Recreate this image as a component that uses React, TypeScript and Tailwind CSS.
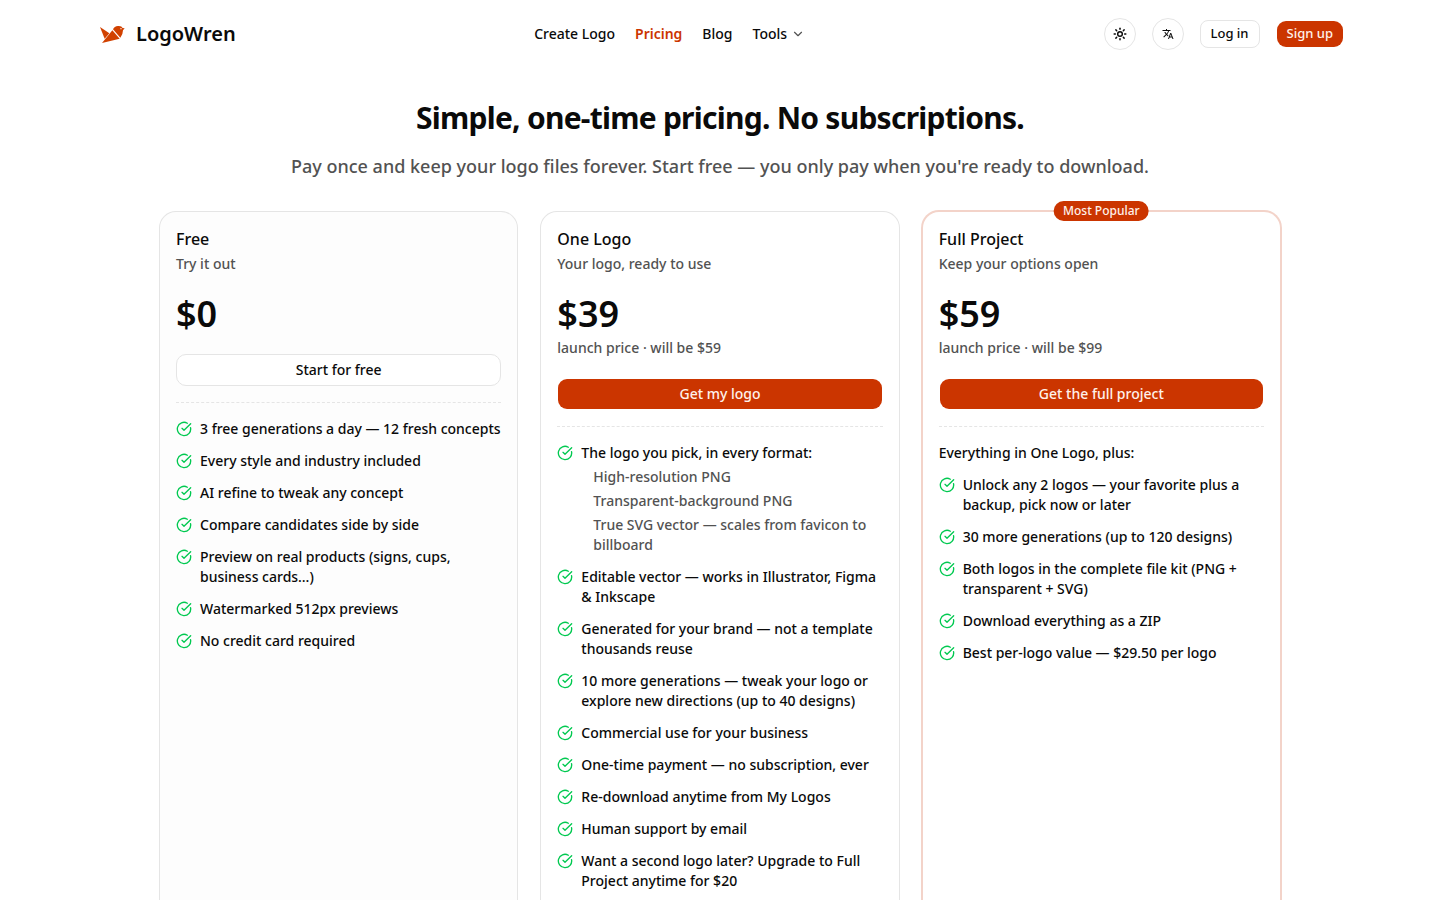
import { ChevronDown, CircleCheckBig, Sun } from 'lucide-react'
import { MdTranslate } from 'react-icons/md'

type Feature = {
  text: string
  details?: string[]
}

type Plan = {
  name: string
  tagline: string
  price: string
  note?: string
  cta: string
  intro?: string
  features: Feature[]
  variant: 'muted' | 'plain' | 'popular'
}

const plans: Plan[] = [
  {
    name: 'Free',
    tagline: 'Try it out',
    price: '$0',
    cta: 'Start for free',
    variant: 'muted',
    features: [
      { text: '3 free generations a day — 12 fresh concepts' },
      { text: 'Every style and industry included' },
      { text: 'AI refine to tweak any concept' },
      { text: 'Compare candidates side by side' },
      { text: 'Preview on real products (signs, cups, business cards…)' },
      { text: 'Watermarked 512px previews' },
      { text: 'No credit card required' }
    ]
  },
  {
    name: 'One Logo',
    tagline: 'Your logo, ready to use',
    price: '$39',
    note: 'launch price · will be $59',
    cta: 'Get my logo',
    variant: 'plain',
    features: [
      {
        text: 'The logo you pick, in every format:',
        details: [
          'High-resolution PNG',
          'Transparent-background PNG',
          'True SVG vector — scales from favicon to billboard'
        ]
      },
      { text: 'Editable vector — works in Illustrator, Figma & Inkscape' },
      { text: 'Generated for your brand — not a template thousands reuse' },
      { text: '10 more generations — tweak your logo or explore new directions (up to 40 designs)' },
      { text: 'Commercial use for your business' },
      { text: 'One-time payment — no subscription, ever' },
      { text: 'Re-download anytime from My Logos' },
      { text: 'Human support by email' },
      { text: 'Want a second logo later? Upgrade to Full Project anytime for $20' }
    ]
  },
  {
    name: 'Full Project',
    tagline: 'Keep your options open',
    price: '$59',
    note: 'launch price · will be $99',
    cta: 'Get the full project',
    intro: 'Everything in One Logo, plus:',
    variant: 'popular',
    features: [
      { text: 'Unlock any 2 logos — your favorite plus a backup, pick now or later' },
      { text: '30 more generations (up to 120 designs)' },
      { text: 'Both logos in the complete file kit (PNG + transparent + SVG)' },
      { text: 'Download everything as a ZIP' },
      { text: 'Best per-logo value — $29.50 per logo' }
    ]
  }
]

const cardStyles = {
  muted: 'bg-[#fdfdfd] ring-1 ring-[#e5e5e5]',
  plain: 'bg-white ring-1 ring-[#e5e5e5]',
  popular: 'bg-white ring-2 ring-[#f3d3c9]'
}

function BirdMark() {
  return (
    <svg viewBox="18 0 96 96" className="size-8" fill="#d14100" aria-hidden="true">
      <path d="M30 27 L58 46 L44 62 Z" />
      <path d="M36 75 L67 37 L89 62 Z" />
      <path
        fillRule="evenodd"
        d="M69 34 Q73 25 84 24 Q95 23 98 30 L104 31 L99 37 Q99 49 91 59 Z M91 32 a2 2 0 1 0 4 0 a2 2 0 1 0 -4 0 Z"
      />
    </svg>
  )
}

function Header() {
  return (
    <header className="mx-auto flex h-17 w-full max-w-7xl items-center justify-between px-4">
      <a href="#" className="flex items-center gap-2">
        <BirdMark />
        <span className="text-xl font-semibold">LogoWren</span>
      </a>

      <nav className="flex items-center gap-5 text-sm">
        <a href="#">Create Logo</a>
        <a href="#" className="font-semibold text-[#cb3500]">Pricing</a>
        <a href="#">Blog</a>
        <button type="button" className="flex items-center gap-1">
          Tools
          <ChevronDown className="size-3.5 text-neutral-600" />
        </button>
      </nav>

      <div className="flex items-center gap-4 text-[13px]">
        <button
          type="button"
          aria-label="Toggle theme"
          className="flex size-8 items-center justify-center rounded-full border border-[#e5e5e5]"
        >
          <Sun className="size-3.5" strokeWidth={2.5} />
        </button>
        <button
          type="button"
          aria-label="Change language"
          className="flex size-8 items-center justify-center rounded-full border border-[#e5e5e5]"
        >
          <MdTranslate className="size-3" />
        </button>
        <a href="#" className="flex h-7 items-center rounded-lg border border-[#e5e5e5] px-2.5">
          Log in
        </a>
        <a
          href="#"
          className="flex h-7 items-center rounded-[10px] border border-transparent bg-[#cb3500] bg-clip-padding px-2.5 text-[#fff1ea]"
        >
          Sign up
        </a>
      </div>
    </header>
  )
}

function PlanCard({ plan }: { plan: Plan }) {
  return (
    <article className={`relative flex flex-col rounded-2xl px-4 pt-4 pb-10 ${cardStyles[plan.variant]}`}>
      {plan.variant === 'popular' && (
        <span className="absolute -top-[11px] left-1/2 flex h-5 -translate-x-1/2 items-center rounded-full bg-[#cb3500] px-[9px] text-xs whitespace-nowrap text-[#fff1ea]">
          Most Popular
        </span>
      )}

      <h2 className="text-base leading-[22px]">{plan.name}</h2>
      <p className="mt-1 text-sm text-[#525252]">{plan.tagline}</p>
      <p className="mt-5 text-4xl font-semibold">{plan.price}</p>
      {plan.note && <p className="mt-1 text-sm text-[#525252]">{plan.note}</p>}

      <button
        type="button"
        className={`mt-5 h-8 w-full rounded-[10px] border text-sm ${
          plan.variant === 'muted'
            ? 'border-[#e5e5e5] bg-white'
            : 'border-transparent bg-[#cb3500] bg-clip-padding text-[#fff1ea]'
        }`}
      >
        {plan.cta}
      </button>

      <hr className="my-4 border-t border-dashed border-[#e5e5e5]" />

      {plan.intro && <p className="mb-3 text-sm">{plan.intro}</p>}
      <ul className="flex flex-col gap-3 text-sm">
        {plan.features.map((feature) => (
          <li key={feature.text} className="flex gap-2">
            <CircleCheckBig className="mt-0.5 size-4 shrink-0 text-[#00c950]" />
            <div>
              {feature.text}
              {feature.details && (
                <ul className="mt-1 flex flex-col gap-1 pl-3 text-[#525252]">
                  {feature.details.map((detail) => (
                    <li key={detail}>{detail}</li>
                  ))}
                </ul>
              )}
            </div>
          </li>
        ))}
      </ul>
    </article>
  )
}

export default function App() {
  return (
    <div className="min-h-screen bg-white font-['Noto_Sans',sans-serif] font-medium text-[#0a0a0a]">
      <Header />
      <main className="mx-auto w-full max-w-6xl px-4 pt-8 pb-16">
        <div className="text-center">
          <h1 className="text-3xl font-bold tracking-tight">Simple, one-time pricing. No subscriptions.</h1>
          <p className="mt-4 text-lg text-[#525252]">
            Pay once and keep your logo files forever. Start free — you only pay when you're ready to download.
          </p>
        </div>
        <div className="mt-8 grid gap-6 md:grid-cols-3">
          {plans.map((plan) => (
            <PlanCard key={plan.name} plan={plan} />
          ))}
        </div>
      </main>
    </div>
  )
}
